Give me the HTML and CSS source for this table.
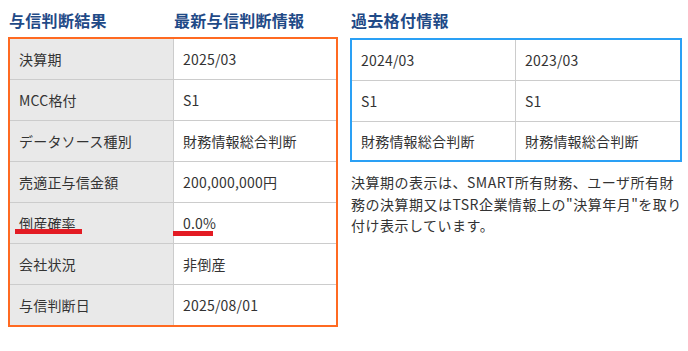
FILE: index.html
```html
<!DOCTYPE html>
<html lang="ja">
<head>
<meta charset="utf-8">
<link rel="stylesheet" href="styles.css">
</head>
<body>
<div class="page">
  <section class="left">
    <div class="heads">
      <h2 class="head">与信判断結果</h2>
      <h2 class="head">最新与信判断情報</h2>
    </div>
    <div class="box orange">
      <div class="lbl">決算期</div><div class="val">2025/03</div>
      <div class="lbl">MCC格付</div><div class="val">S1</div>
      <div class="lbl">データソース種別</div><div class="val">財務情報総合判断</div>
      <div class="lbl">売適正与信金額</div><div class="val">200,000,000円</div>
      <div class="lbl marked">倒産確率<span class="mark mark-l"></span></div><div class="val marked">0.0%<span class="mark mark-v"></span></div>
      <div class="lbl">会社状況</div><div class="val">非倒産</div>
      <div class="lbl">与信判断日</div><div class="val">2025/08/01</div>
    </div>
  </section>
  <section class="right">
    <h2 class="head">過去格付情報</h2>
    <div class="box blue">
      <div class="val">2024/03</div><div class="val">2023/03</div>
      <div class="val">S1</div><div class="val">S1</div>
      <div class="val">財務情報総合判断</div><div class="val">財務情報総合判断</div>
    </div>
    <p class="note">決算期の表示は、SMART所有財務、ユーザ所有財務の決算期又はTSR企業情報上の"決算年月"を取り付け表示しています。</p>
  </section>
</div>
</body>
</html>
```

FILE: styles.css
```css
html, body {
  margin: 0;
  padding: 0;
  background: #fff;
}
body {
  font-family: "Noto Sans CJK JP", "Noto Sans", sans-serif;
  color: #333;
}
.page {
  display: flex;
  gap: 12px;
  padding: 0 0 0 8px;
}
.left {
  width: 330px;
}
.right {
  width: 332px;
}
.heads {
  display: grid;
  grid-template-columns: 165px 1fr;
}
.head {
  margin: 0;
  padding: 8px 0 5px 1px;
  font-size: 16px;
  line-height: 24px;
  font-weight: 700;
  color: #1f4a87;
  letter-spacing: 0.3px;
}
.right .head {
  padding-left: 1px;
  margin-bottom: 1px;
}
.box {
  display: grid;
  gap: 1px;
  background: #cccccc;
  border: 2px solid;
}
.orange {
  border-color: #ff6a21;
  grid-template-columns: 163px 162px;
  grid-template-rows: repeat(7, 40px);
}
.blue {
  border-color: #2aa0f5;
  grid-template-columns: 163px 164px;
  grid-template-rows: 40px 40px 38px;
}
.lbl, .val {
  display: flex;
  align-items: center;
  padding-left: 9px;
  font-size: 14px;
  letter-spacing: 0.2px;
  color: #333;
}
.lbl {
  background: #e9e9e9;
}
.val {
  background: #fff;
}
.marked {
  position: relative;
}
.mark {
  position: absolute;
  height: 5px;
  background: #e31b23;
}
.mark-l {
  left: 5px;
  width: 67px;
  top: 26px;
}
.mark-v {
  left: -1px;
  width: 40px;
  top: 28px;
}
.note {
  margin: 10px 0 0 1px;
  font-size: 14px;
  line-height: 21.5px;
  letter-spacing: 0.5px;
  color: #333;
}
```
